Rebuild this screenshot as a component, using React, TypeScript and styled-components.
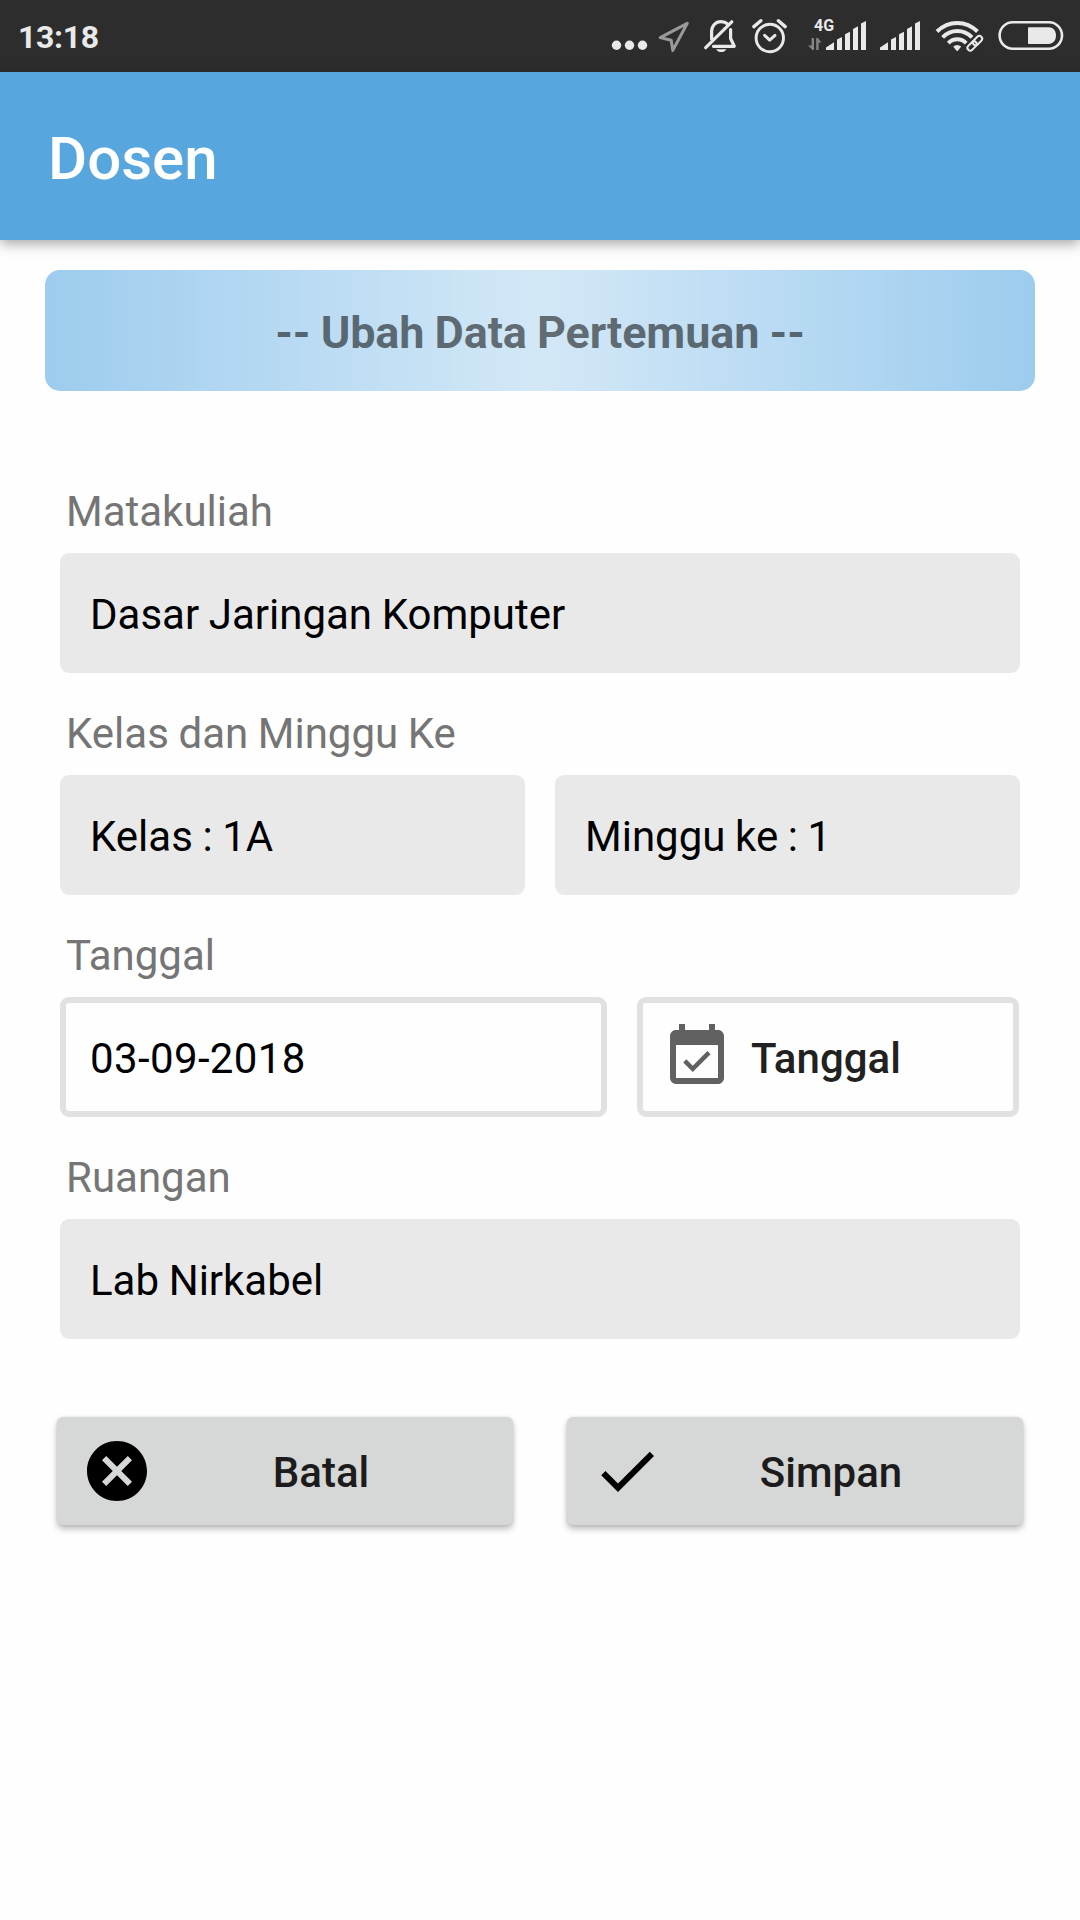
import React from "react";
import styled, { createGlobalStyle } from "styled-components";
import { MdCancel, MdCheck, MdEventAvailable } from "react-icons/md";

const GlobalStyle = createGlobalStyle`
  *, *::before, *::after { box-sizing: border-box; }
  body {
    margin: 0;
    background: #fefefe;
    font-family: Roboto, "Noto Sans", sans-serif;
    -webkit-font-smoothing: antialiased;
  }
  button { font-family: inherit; }
`;

const Screen = styled.div`
  display: flex;
  flex-direction: column;
  width: 1080px;
  height: 1920px;
  overflow: hidden;
  background: #fefefe;
`;

const StatusBar = styled.div`
  display: flex;
  align-items: center;
  justify-content: space-between;
  height: 72px;
  flex: none;
  padding: 0 10px 0 18px;
  background: #2d2d2d;
  color: #e9e9e9;
`;

const Clock = styled.span`
  padding-top: 2px;
  font-size: 32px;
  line-height: 38px;
  font-weight: 700;
  letter-spacing: -0.35px;
`;

const StatusIcons = styled.div`
  display: flex;
  height: 72px;
`;

const Glyph = styled.svg<{ $width: number }>`
  display: block;
  width: ${(p) => p.$width}px;
  height: 72px;
`;

const AppBar = styled.header`
  display: flex;
  align-items: center;
  height: 168px;
  flex: none;
  padding: 5px 48px 0;
  background: #58a6de;
  box-shadow: 0 4px 12px rgba(0, 0, 0, 0.34);
`;

const AppTitle = styled.h1`
  margin: 0;
  color: #fff;
  font-size: 60px;
  line-height: 70px;
  font-weight: 500;
`;

const Banner = styled.h2`
  display: flex;
  align-items: center;
  justify-content: center;
  height: 121px;
  flex: none;
  margin: 30px 45px 0;
  padding-top: 4px;
  border-radius: 15px;
  background: linear-gradient(90deg, #9dccee, #d3e8f7 50%, #9dccee);
  color: rgba(0, 0, 0, 0.54);
  font-size: 45px;
  line-height: 53px;
  font-weight: 700;
  letter-spacing: -0.14px;
  word-spacing: -0.8px;
`;

const Form = styled.form`
  display: flex;
  flex-direction: column;
  padding: 84px 60px 0;
`;

const FieldGroup = styled.div`
  display: flex;
  flex-direction: column;
  height: 222px;
`;

const Label = styled.label`
  height: 78px;
  padding: 12px 6px 0;
  color: #757575;
  font-size: 42px;
  line-height: 49px;
  word-spacing: -0.8px;
`;

const Row = styled.div`
  display: flex;
  gap: 30px;
`;

const Field = styled.div<{ $outlined?: boolean; $width?: number }>`
  display: flex;
  align-items: center;
  flex: ${(p) => (p.$width ? `0 0 ${p.$width}px` : "1 1 0")};
  height: 120px;
  padding: ${(p) => (p.$outlined ? "3px 24px 0" : "3px 30px 0")};
  border: ${(p) => (p.$outlined ? "6px solid #e1e1e1" : "none")};
  border-radius: 9px;
  background: ${(p) => (p.$outlined ? "#fefefe" : "#e9e9e9")};
  color: #000;
  font-size: 42px;
  line-height: 49px;
  letter-spacing: ${(p) => (p.$outlined ? "0.37px" : "normal")};
  word-spacing: -0.8px;
`;

const DateButton = styled.button`
  display: flex;
  align-items: center;
  gap: 18px;
  width: 382px;
  height: 120px;
  padding: 0 18px;
  border: 6px solid #e1e1e1;
  border-radius: 9px;
  background: #fefefe;
  color: #212121;
  font-size: 42px;
  line-height: 49px;
  font-weight: 500;

  svg {
    flex: none;
    color: #616161;
  }
`;

const ButtonText = styled.span`
  padding-top: 3px;
`;

const Actions = styled.div`
  display: flex;
  gap: 54px;
  margin: 54px -3px 0;
`;

const ActionButton = styled.button`
  display: flex;
  align-items: center;
  flex: 1 1 0;
  height: 108px;
  padding: 0 24px;
  border: 0;
  border-radius: 6px;
  background: #d6d7d7;
  box-shadow: 0 4px 6px rgba(0, 0, 0, 0.26), 0 0 3px rgba(0, 0, 0, 0.1);
  color: #1c1c1c;
  font-size: 42px;
  line-height: 49px;
  font-weight: 500;

  svg {
    flex: none;
    color: #000;
  }

  ${ButtonText} {
    flex: 1;
    text-align: center;
  }
`;

const INK = "#e9e9e9";
const DIM = "#9a9a9a";

const MoreDots = () => (
  <Glyph $width={44} viewBox="610 0 44 72" fill={INK}>
    <circle cx="616.5" cy="45.3" r="4.7" />
    <circle cx="629.5" cy="45.3" r="4.7" />
    <circle cx="642.5" cy="45.3" r="4.7" />
  </Glyph>
);

const LocationArrow = () => (
  <Glyph $width={42} viewBox="654 0 42 72" fill="none" stroke={DIM} strokeWidth="3" strokeLinejoin="round">
    <path d="M687.3 23.3L660.2 37.6L671.2 40.2L672.8 50.4Z" />
  </Glyph>
);

const BellOff = () => (
  <Glyph $width={48} viewBox="696 0 48 72" fill="none" stroke={INK} strokeWidth="3.2" strokeLinejoin="round" strokeLinecap="round">
    <path d="M711.6 39V31.5C711.6 26 715.5 21.6 721 21.6C723.8 21.6 726 22.5 727.6 24" />
    <path d="M730.6 29.5V38.5L734.3 46.3H713.5" />
    <path d="M705.7 47.7L731.8 21.8" />
    <path d="M716 49.2H726.5C725 51.2 723.4 52 721.3 52C719.2 52 717.3 51.2 716 49.2Z" fill={INK} stroke="none" />
  </Glyph>
);

const Alarm = () => (
  <Glyph $width={52} viewBox="744 0 52 72" fill="none" stroke={INK} strokeLinecap="round" strokeLinejoin="round">
    <circle cx="769.8" cy="38" r="13.7" strokeWidth="2.9" />
    <path d="M764.6 35.4L769.7 40.2L775 35.4" strokeWidth="3" />
    <path d="M753.9 26.6L760.8 20.7M785.2 26.6L778.4 20.7" strokeWidth="3.4" />
  </Glyph>
);

const bars = (x: number) =>
  `M${x} 50V47.6L${x + 8} 42.3V50Z` +
  [0, 1, 2, 3]
    .map((i) => {
      const left = x + 11 + i * 8;
      const top = 37 - i * 5.33;
      return `M${left} 50V${top + 2.6}L${left + 5} ${top}V50Z`;
    })
    .join("");

const MobileSignal = () => (
  <Glyph $width={76} viewBox="796 0 76 72" fill={INK}>
    <text x="814" y="31.2" fontSize="16" fontWeight="700" fontFamily="Roboto, sans-serif">
      4G
    </text>
    <path d="M811.6 38H814V50H812.4L808 45.4H811.6ZM816.2 50V38H817.8L821.4 42.6H818.6V50Z" fill="#858585" />
    <path d={bars(826)} />
  </Glyph>
);

const SecondSignal = () => (
  <Glyph $width={56} viewBox="872 0 56 72" fill={INK}>
    <path d={bars(880)} />
  </Glyph>
);

const WifiLinked = () => (
  <Glyph $width={62} viewBox="928 0 62 72" fill="none" stroke={INK}>
    <path d="M937 31.5C948.5 20 966 20 977.5 31.5" strokeWidth="4" />
    <path d="M942.6 37.3C951 28.9 963.6 28.9 972 37.3" strokeWidth="4" />
    <path d="M948.3 43.1C953.5 37.9 961 37.9 966.2 43.1" strokeWidth="4" />
    <path d="M953.2 46.6Q957.2 43.6 961.2 46.6L957.9 50.7Q957.2 51.3 956.5 50.7Z" fill={INK} stroke="none" />
    <g transform="translate(974.8 43.3) rotate(-45)">
      <rect x="-11" y="-5" width="21" height="10" rx="5" fill="#2d2d2d" stroke="none" />
      <rect x="-9.2" y="-2.8" width="10.8" height="5.6" rx="2.8" strokeWidth="2" />
      <rect x="-1.6" y="-2.8" width="10.8" height="5.6" rx="2.8" strokeWidth="2" />
    </g>
  </Glyph>
);

const Battery = () => (
  <Glyph $width={80} viewBox="990 0 80 72" fill="none">
    <rect x="999.6" y="22.3" width="62.4" height="26.4" rx="13.2" stroke={INK} strokeWidth="2.6" />
    <path d="M1029 27.2H1048.5C1053 27.2 1056 30.6 1056 35.5C1056 40.4 1053 43.9 1048.5 43.9H1029Q1028 43.9 1028 42.9V28.2Q1028 27.2 1029 27.2Z" fill={INK} />
  </Glyph>
);

export default function App() {
  return (
    <>
      <GlobalStyle />
      <Screen>
        <StatusBar>
          <Clock>13:18</Clock>
          <StatusIcons>
            <MoreDots />
            <LocationArrow />
            <BellOff />
            <Alarm />
            <MobileSignal />
            <SecondSignal />
            <WifiLinked />
            <Battery />
          </StatusIcons>
        </StatusBar>
        <AppBar>
          <AppTitle>Dosen</AppTitle>
        </AppBar>
        <Banner>-- Ubah Data Pertemuan --</Banner>
        <Form onSubmit={(e) => e.preventDefault()}>
          <FieldGroup>
            <Label>Matakuliah</Label>
            <Row>
              <Field>Dasar Jaringan Komputer</Field>
            </Row>
          </FieldGroup>
          <FieldGroup>
            <Label>Kelas dan Minggu Ke</Label>
            <Row>
              <Field>Kelas : 1A</Field>
              <Field>Minggu ke : 1</Field>
            </Row>
          </FieldGroup>
          <FieldGroup>
            <Label>Tanggal</Label>
            <Row>
              <Field $outlined $width={547}>03-09-2018</Field>
              <DateButton type="button">
                <MdEventAvailable size={72} />
                <ButtonText>Tanggal</ButtonText>
              </DateButton>
            </Row>
          </FieldGroup>
          <FieldGroup>
            <Label>Ruangan</Label>
            <Row>
              <Field>Lab Nirkabel</Field>
            </Row>
          </FieldGroup>
          <Actions>
            <ActionButton type="button">
              <MdCancel size={72} />
              <ButtonText>Batal</ButtonText>
            </ActionButton>
            <ActionButton type="submit">
              <MdCheck size={72} />
              <ButtonText>Simpan</ButtonText>
            </ActionButton>
          </Actions>
        </Form>
      </Screen>
    </>
  );
}
